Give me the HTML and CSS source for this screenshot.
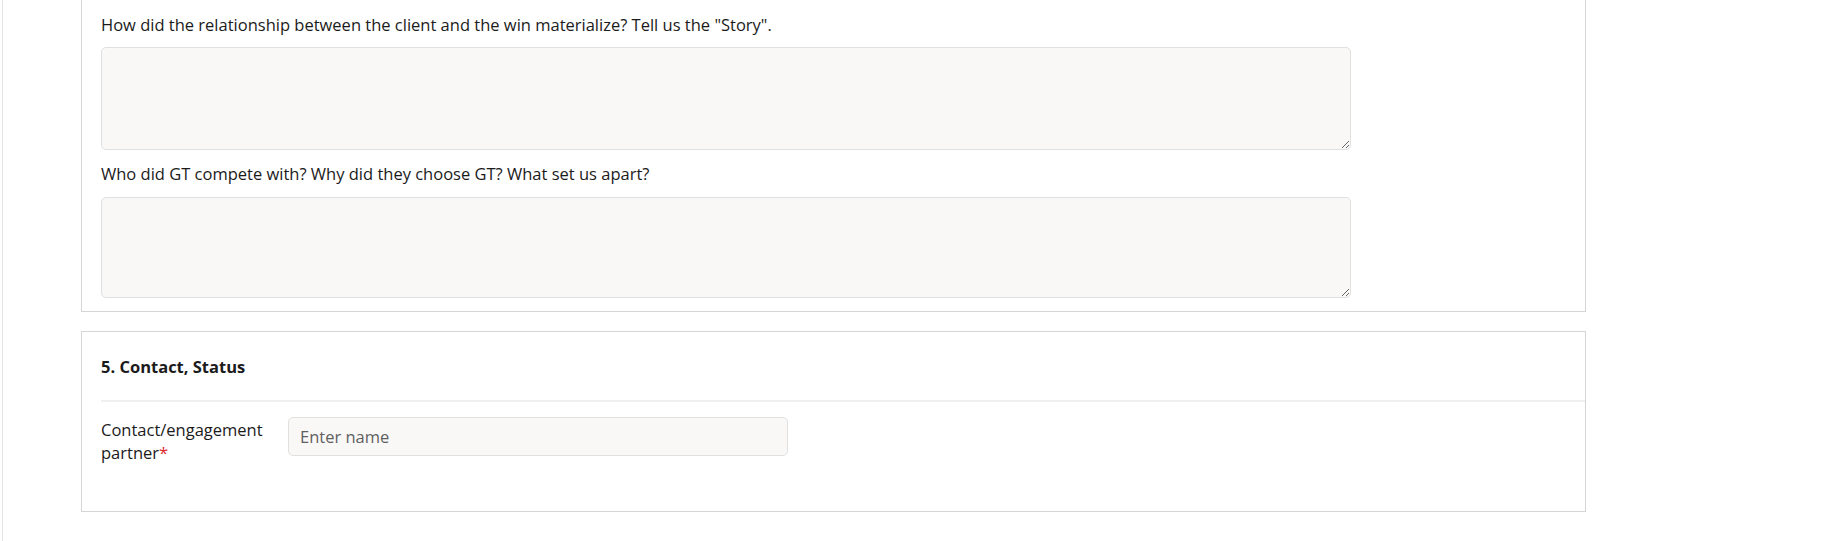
FILE: index.html
```html
<!DOCTYPE html>
<html lang="en">
<head>
<meta charset="utf-8">
<title>Form</title>
<link rel="stylesheet" href="styles.css">
</head>
<body>
<div class="page">
  <section class="card card--continued">
    <div class="field">
      <label class="field-label" for="story">How did the relationship between the client and the win materialize? Tell us the "Story".</label>
      <textarea id="story" class="textarea textarea--first"></textarea>
    </div>
    <div class="field">
      <label class="field-label" for="compete">Who did GT compete with? Why did they choose GT? What set us apart?</label>
      <textarea id="compete" class="textarea"></textarea>
    </div>
  </section>

  <section class="card card--contact">
    <header class="card-header">
      <h2 class="card-title">5. Contact, Status</h2>
    </header>
    <div class="card-body">
      <div class="row">
        <label class="row-label" for="partner">Contact/engagement partner<span class="req">*</span></label>
        <input id="partner" class="input" type="text" placeholder="Enter name">
      </div>
    </div>
  </section>
</div>
</body>
</html>
```

FILE: styles.css
```css
* { box-sizing: border-box; }

html, body {
  margin: 0;
  background: #ffffff;
}

body {
  font-family: "Open Sans", "Noto Sans", sans-serif;
  font-size: 16.5px;
  color: #1b1b1b;
}

.page {
  margin-left: 2px;
  border-left: 1px solid #e4e4e4;
  min-height: 541px;
  padding-left: 78px;
  padding-bottom: 30px;
  display: flex;
  flex-direction: column;
  gap: 19px;
}

.card {
  width: 1505px;
  border: 1px solid #d5d5d5;
  background: #ffffff;
}

.card--continued {
  border-top: none;
  padding: 14px 20px 13px 19px;
  display: flex;
  flex-direction: column;
  gap: 13px;
}

.field {
  display: flex;
  flex-direction: column;
  gap: 11px;
}

.field + .field .field-label {
  margin-bottom: 1px;
}

.field-label {
  line-height: 22px;
}

.textarea {
  display: block;
  width: 1250px;
  height: 101px;
  background: #f9f8f7;
  border: 1px solid #e0e0e0;
  border-radius: 5px;
  font: inherit;
  padding: 8px 10px;
  margin: 0;
}

.textarea--first {
  height: 103px;
}

.card--contact .card-header {
  margin-left: 19px;
  padding: 24px 0 22px 0;
  border-bottom: 2px solid #efefef;
}

.card-title {
  margin: 0;
  font-size: 16.5px;
  font-weight: 700;
  line-height: 22px;
}

.card-body {
  padding: 15px 20px 47px 19px;
}

.row {
  display: flex;
  align-items: flex-start;
  gap: 15px;
}

.row-label {
  width: 172px;
  line-height: 23px;
  flex-shrink: 0;
  padding-top: 1px;
}

.req {
  color: #e0262b;
}

.input {
  width: 500px;
  height: 39px;
  background: #f9f8f7;
  border: 1px solid #e0e0e0;
  border-radius: 5px;
  font: inherit;
  padding: 0 11px;
  margin: 0;
  color: #1b1b1b;
}

.input::placeholder {
  color: #5f5f5f;
}
```
